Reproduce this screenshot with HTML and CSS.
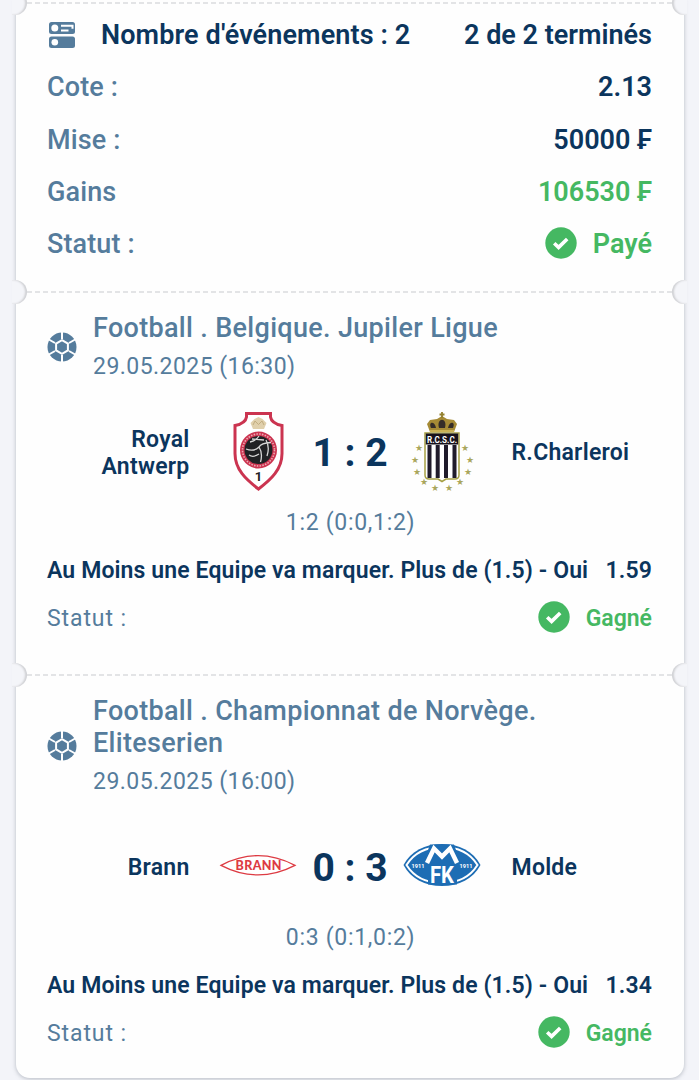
FILE: index.html
```
<!DOCTYPE html>
<html lang="fr">
<head>
    <meta charset="UTF-8">
    <title>Coupon</title>
    <link rel="stylesheet" href="styles.css">
</head>
<body>
    <!-- Shared icons -->
    <svg class="defs" width="0" height="0">
        <symbol id="check" viewBox="0 0 32 32">
            <circle cx="16" cy="16" r="15.7" fill="#45b862"/>
            <path d="M9.2 16.2l4.4 4.2 8.6-8.4" fill="none" stroke="#fff" stroke-width="3.6"/>
        </symbol>
        <symbol id="ball" viewBox="0 0 30 30">
            <circle cx="15" cy="15" r="14.5" fill="#557c9c"/>
            <path d="M15 0v7M15 23v7M1 7l7 4M22 19l7 4M1 23l7-4M22 11l7-4" stroke="#fff" stroke-width="2"/>
            <path d="M15 8.2l5.9 3.4v6.8L15 21.8l-5.900-3.400v-6.800z" fill="#557c9c" stroke="#fff" stroke-width="2"/>
        </symbol>
    </svg>

    <div class="ticket">
        <div class="section summary">
            <div class="tear">
                <span class="notch left"></span>
                <span class="notch right"></span>
            </div>
            <div class="row strong">
                <svg class="events-icon" viewBox="0 0 26 26">
                    <rect width="26" height="12" rx="2.5" fill="#557c9c"/>
                    <rect y="14.5" width="26" height="11.5" rx="2.5" fill="#557c9c"/>
                    <circle cx="5.8" cy="6" r="3.5" fill="#fff"/>
                    <circle cx="5.8" cy="20.2" r="3.3" fill="#fff"/>
                    <path d="M12 3.8h11.5v3M12 8.5h7.5" fill="none" stroke="#fff" stroke-width="2"/>
                </svg>
                <span class="events">Nombre d'événements : 2</span>
                <span class="finished">2 de 2 terminés</span>
            </div>
            <div class="row"><span>Cote :</span><b class="odds">2.13</b></div>
            <div class="row"><span>Mise :</span><b>50000 ₣</b></div>
            <div class="row"><span>Gains</span><b class="green">106530 ₣</b></div>
            <div class="row">
                <span>Statut :</span>
                <b class="green status"><svg class="check"><use href="#check"/></svg>Payé</b>
            </div>
        </div>

        <div class="section event">
            <div class="tear">
                <span class="notch left"></span>
                <span class="notch right"></span>
            </div>
            <div class="head">
                <svg class="ball"><use href="#ball"/></svg>
                <div>
                    <div class="league">Football . Belgique. Jupiler Ligue</div>
                    <div class="date">29.05.2025 (16:30)</div>
                </div>
            </div>
            <div class="match">
                <div class="team home">Royal<br>Antwerp</div>
                <!-- Royal Antwerp crest -->
                <svg class="logo" viewBox="0 1 78 80">
                    <path d="M27.5 2.5h24v3.5q1 6.5 11.5 8.5v28c0 16-11 26-23.5 35.5C27 68.5 16 58.5 16 42.5v-28q10.5-2 11.5-8.5z" fill="#fff" stroke="#cb3450" stroke-width="3"/>
                    <path d="M34 18l-2.5-6 4-4 4-2 4 2 4 4-2.5 6z" fill="#e0d0ac"/>
                    <path d="M34 14l2-4 3.5 3.5 3.5-3.5 2 4" fill="none" stroke="#c2ad80"/>
                    <circle cx="39.5" cy="39" r="18.5" fill="#cb3450"/>
                    <circle cx="39.5" cy="39" r="16" fill="none" stroke="#eca9b2" stroke-width="1.6" stroke-dasharray="1.5 1.3"/>
                    <circle cx="39.5" cy="39" r="14" fill="#202124"/>
                    <path d="M27 38q8 3 13-2 2-4 12-4.5M40 36q4 6 1.5 15M31 31q6-1 9-6M30 44q4 3 10-1M47 29q4 7 1 16M33 28l12 1" fill="none" stroke="#d7d7d7" stroke-width="1.3"/>
                    <text x="39.5" y="70" class="crest-number">1</text>
                </svg>
                <div class="score">1 : 2</div>
                <!-- Charleroi crest -->
                <svg class="logo" viewBox="0 1 78 80">
                    <path d="M27 21l-3-8 3-4 7-1 5-3 5 3 7 1 3 4-3 8z" fill="#a58a35"/>
                    <path d="M39 1v6M36.5 3.5h5" stroke="#93802f" stroke-width="1.8"/>
                    <path d="M28 17c-3-7 4-7 5 0m3 0c-3-11 9-11 6 0m3 0c1-7 8-7 5 0" fill="#352d28"/>
                    <path d="M27 20h24" stroke="#d7bf61" stroke-width="1.5"/>
                    <path d="M22 22h34v42q0 4-4 4h-9l-4 2.5-4-2.5h-9q-4 0-4-4z" fill="#fff" stroke="#a6a044" stroke-width="1.5"/>
                    <path d="M22.8 22.5h32.4v11H22.800z" fill="#17121d"/>
                    <path d="M26.5 34v33M34.7 34v33M43 34v33M51.5 34v33" stroke="#201b2b" stroke-width="4"/>
                    <text x="39" y="31.5" class="rcsc" textLength="30" lengthAdjust="spacingAndGlyphs">R.C.S.C.</text>
                    <g class="stars">
                        <text x="16" y="39.5">★</text><text x="62" y="39.5">★</text>
                        <text x="12" y="52">★</text><text x="67" y="52">★</text>
                        <text x="14" y="64">★</text><text x="65" y="64">★</text>
                        <text x="21" y="74">★</text><text x="57" y="74">★</text>
                        <text x="32" y="79.5">★</text><text x="46" y="79.5">★</text>
                    </g>
                </svg>
                <div class="team away">R.Charleroi</div>
            </div>
            <div class="periods">1:2 (0:0,1:2)</div>
            <div class="market"><span>Au Moins une Equipe va marquer. Plus de (1.5) - Oui</span><span>1.59</span></div>
            <div class="result">
                <span>Statut :</span>
                <b class="green status"><svg class="check"><use href="#check"/></svg>Gagné</b>
            </div>
        </div>

        <div class="section event last">
            <div class="tear">
                <span class="notch left"></span>
                <span class="notch right"></span>
            </div>
            <div class="head">
                <svg class="ball"><use href="#ball"/></svg>
                <div>
                    <div class="league">Football . Championnat de Norvège. Eliteserien</div>
                    <div class="date">29.05.2025 (16:00)</div>
                </div>
            </div>
            <div class="match">
                <div class="team home">Brann</div>
                <!-- Brann logo -->
                <svg class="logo" viewBox="0 0 78 80">
                    <path d="M2 38.3Q39 19 76 38.3 39 57.5 2 38.3z" fill="#fff" stroke="#dd3b43" stroke-width="1.3"/>
                    <text x="39.5" y="42.5" class="brann" textLength="46">BRANN</text>
                </svg>
                <div class="score">0 : 3</div>
                <!-- Molde logo -->
                <svg class="logo" viewBox="0 0 78 80">
                    <path d="M.5 38C8 24 22 17 39 17S70 24 77.5 38C70 52 56 59 39 59S8 52 .5 38z" fill="#1d6db4"/>
                    <path d="M3.5 38C11 26 22 20 39 20s28 6 35.5 18C67 50 56 56 39 56S11 50 3.5 38z" fill="none" stroke="#fff" stroke-width="2"/>
                    <path d="M20 37l7-19.5h24L58 37h-4v20.500H25V37z" fill="#1d6db4"/>
                    <path d="M24 36l7-14.500 8 8 8-8L54 36" fill="none" stroke="#fff" stroke-width="4.5"/>
                    <text x="39" y="56" class="fk" textLength="24" lengthAdjust="spacingAndGlyphs">FK</text>
                    <text x="15" y="40.5" class="year" textLength="13" lengthAdjust="spacingAndGlyphs">1911</text>
                    <text x="63" y="40.5" class="year" textLength="13" lengthAdjust="spacingAndGlyphs">1911</text>
                </svg>
                <div class="team away">Molde</div>
            </div>
            <div class="periods">0:3 (0:1,0:2)</div>
            <div class="market"><span>Au Moins une Equipe va marquer. Plus de (1.5) - Oui</span><span>1.34</span></div>
            <div class="result">
                <span>Statut :</span>
                <b class="green status"><svg class="check"><use href="#check"/></svg>Gagné</b>
            </div>
        </div>
    </div>
</body>
</html>
```
FILE: styles.css
```
* { box-sizing: border-box; }
body { margin: 0; padding: 0 15px 0 16px; height: 1080px; overflow: hidden; background: #f3f4f9; font-family: Roboto, sans-serif; color: #557c9c; }
.defs { position: absolute; }
b { font-weight: 600; }

.ticket { background: #fefefe; height: 1078px; border-radius: 0 0 14px 14px; box-shadow: 0 1px 4px rgba(70,80,95,0.35); }
.section { position: relative; padding: 20px 32px 0 31px; }
.summary { height: 292px; padding-top: 9px; }
.event { height: 383px; }
.last { height: 403px; }

/* dashed cut line with the half-round notches */
.tear { position: absolute; top: -1px; left: 11px; right: 12px; height: 2px; background: repeating-linear-gradient(90deg, #e3e4e6 0 5px, transparent 5px 8px); }
.summary .tear { top: 2px; }
.notch { position: absolute; top: -11px; width: 15px; height: 24px; background: #f4f5f9; }
.left { left: -15px; border-radius: 0 12px 12px 0; box-shadow: inset -2px 0 2px #d0d1d4; }
.right { right: -15px; border-radius: 12px 0 0 12px; box-shadow: inset 2px 0 2px #d0d1d4; }

.row { display: flex; align-items: center; justify-content: space-between; height: 52.3px; font-size: 27px; font-weight: 500; letter-spacing: 0.12px; }
.row b, .strong { color: #0b355d; font-weight: 600; }
.row b, .finished { letter-spacing: 0; }
.events-icon { width: 26px; height: 26px; margin-left: 2px; }
.events { margin-left: 26px; }
.finished { margin-left: auto; }
.row .green, .green { color: #45b862; }
.status { display: flex; align-items: center; gap: 16px; }
.check { width: 32px; height: 32px; margin-top: -3px; }

.head { display: flex; align-items: center; }
.ball { width: 30px; height: 30px; margin-right: 16px; flex: none; }
.league { font-size: 27px; font-weight: 500; line-height: 32px; width: 470px; letter-spacing: 0.32px; }
.date { margin-top: 8px; font-size: 23px; line-height: 30px; letter-spacing: 0.45px; }

.match { display: grid; grid-template-columns: 1fr 78px 106px 78px 1fr; align-items: center; height: 80px; margin-top: 30px; color: #0b355d; }
.team { padding-top: 1px; font-size: 23px; font-weight: 600; line-height: 27px; letter-spacing: 0.25px; }
.home { text-align: right; padding-right: 29px; }
.away { padding-left: 31px; }
.logo { width: 78px; height: 80px; }
.score { padding-top: 2px; padding-left: 1px; font-size: 39px; font-weight: 700; text-align: center; }
.periods { margin-top: 16px; padding-left: 2px; line-height: 30px; font-size: 23px; letter-spacing: 0.7px; text-align: center; }
.market { display: flex; justify-content: space-between; margin-top: 18px; line-height: 30px; font-size: 23px; font-weight: 600; color: #0b355d; letter-spacing: 0.12px; white-space: nowrap; }
.result { display: flex; justify-content: space-between; align-items: center; height: 32px; margin-top: 16px; font-size: 23px; letter-spacing: 0.9px; }
.result b { letter-spacing: 0; }

.crest-number { font-size: 13px; font-weight: 700; text-anchor: middle; fill: #222; }
.rcsc { font-size: 9px; font-weight: 700; text-anchor: middle; fill: #fff; }
.stars { font-family: "DejaVu Sans", sans-serif; font-size: 9px; text-anchor: middle; fill: #aaa65c; }
.brann { font-family: Lato, sans-serif; font-size: 12.5px; font-weight: 900; text-anchor: middle; fill: #dd3b43; }
.fk { font-size: 23px; font-weight: 700; text-anchor: middle; fill: #fff; }
.year { font-size: 6px; font-weight: 700; text-anchor: middle; fill: #fff; }
```
